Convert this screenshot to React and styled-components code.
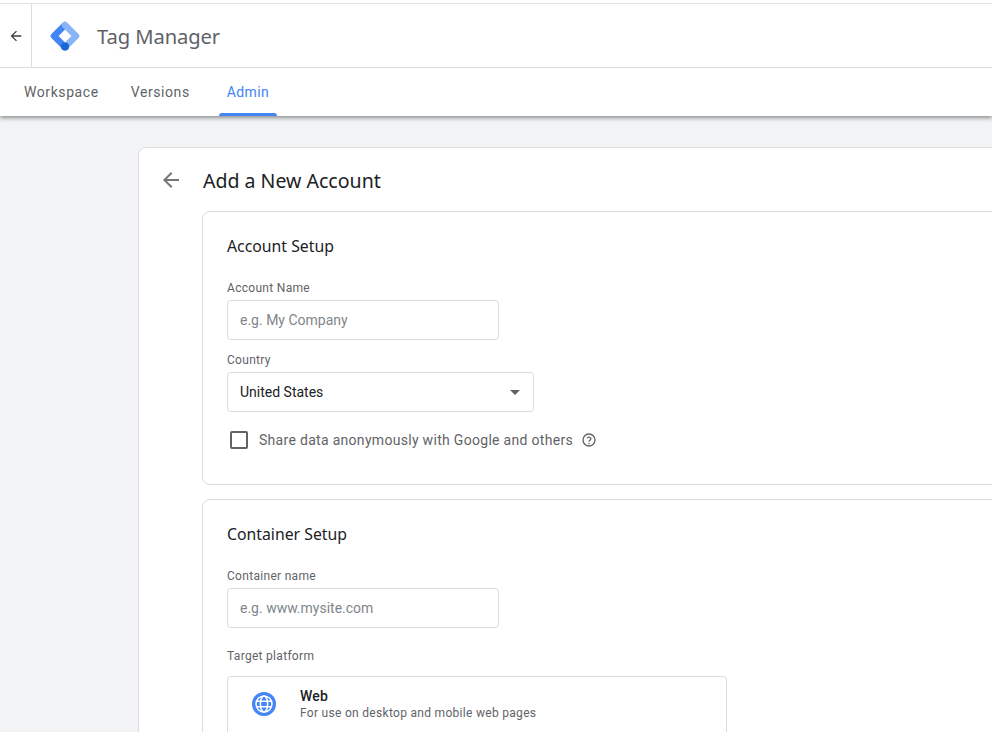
import React from 'react';
import styled, { createGlobalStyle } from 'styled-components';

const GlobalStyle = createGlobalStyle`
  html, body {
    margin: 0;
    padding: 0;
    height: 100%;
    overflow: hidden;
    background: #f1f3f4;
    font-family: Roboto, "Liberation Sans", sans-serif;
  }
  * { box-sizing: border-box; }
`;

const Page = styled.div`
  width: 992px;
  height: 732px;
  overflow: hidden;
  background: #f1f3f4;
`;

const TopBar = styled.header`
  position: relative;
  z-index: 1;
  background: #fff;
  padding-top: 3px;
  box-shadow: 0 2px 4px rgba(60, 64, 67, 0.55);
`;

const Brand = styled.div`
  display: flex;
  align-items: center;
  height: 65px;
  border-top: 1px solid #e0e0e0;
  border-bottom: 1px solid #dadce0;
`;

const BackCell = styled.div`
  width: 32px;
  height: 100%;
  display: flex;
  align-items: center;
  justify-content: center;
  padding-left: 1px;
  border-right: 1px solid #dadce0;
`;

const Arrow = styled.svg`
  display: block;
  width: ${p => p.$size}px;
  height: ${p => p.$size}px;
  fill: ${p => p.$color};
`;

const Logo = styled.svg`
  width: 32px;
  height: 32px;
  margin-left: 17px;
`;

const ProductName = styled.div`
  margin-left: 16px;
  font-family: "Noto Sans", Roboto, sans-serif;
  font-size: 20.2px;
  color: #5f6368;
  letter-spacing: -0.1px;
`;

const Tabs = styled.nav`
  display: flex;
  height: 48px;
  padding-left: 8px;
`;

const Tab = styled.div`
  position: relative;
  display: flex;
  align-items: center;
  padding: 0 16px 1px;
  margin-right: ${p => p.$gap || 0}px;
  font-size: 14px;
  font-weight: 400;
  letter-spacing: ${p => (p.$active ? '0.4px' : '0.58px')};
  color: ${p => (p.$active ? '#4285f4' : '#5f6368')};

  ${p => p.$active && `
    &::after {
      content: '';
      position: absolute;
      left: 8px;
      right: 8px;
      bottom: 0;
      height: 3px;
      background: #4285f4;
      border-radius: 3px 3px 0 0;
    }
  `}
`;

const Main = styled.main`
  padding: 31px 0 0 138px;
`;

const OuterCard = styled.section`
  width: 900px;
  background: #fff;
  border: 1px solid #dadce0;
  border-radius: 8px;
  padding: 0 0 0 63px;
`;

const TitleRow = styled.div`
  position: relative;
  display: flex;
  align-items: center;
  height: 63px;
  padding-top: 2px;
`;

const TitleBack = styled.div`
  position: absolute;
  left: -43px;
  top: 20px;
`;

const Title = styled.h1`
  margin: 0 0 0 1px;
  font-family: "Noto Sans", Roboto, sans-serif;
  font-size: 19.55px;
  font-weight: 400;
  color: #202124;
`;

const SetupCard = styled.div`
  border: 1px solid #dadce0;
  border-radius: 8px;
  padding: 24px;
  height: ${p => p.$height}px;
  margin-bottom: 14px;
`;

const SetupTitle = styled.h2`
  margin: -1px 0 23px;
  height: 22px;
  line-height: 22px;
  font-family: "Noto Sans", Roboto, sans-serif;
  font-size: 15.8px;
  font-weight: 400;
  color: #202124;
`;

const Label = styled.div`
  font-size: 12px;
  line-height: 16px;
  letter-spacing: 0.3px;
  color: #5f6368;
  margin-bottom: 4px;
`;

const PlatformLabel = styled(Label)`
  margin-top: 20px;
  margin-bottom: 12px;
`;

const Field = styled.div`
  display: flex;
  align-items: center;
  justify-content: space-between;
  width: ${p => p.$width}px;
  height: 40px;
  padding: 0 13px 0 12px;
  margin-bottom: 12px;
  border: 1px solid #dadce0;
  border-radius: 4px;
  background: #fff;
  font-size: 14px;
  color: ${p => (p.$value ? '#202124' : '#80868b')};
`;

const Caret = styled.span`
  width: 0;
  height: 0;
  border-left: 5px solid transparent;
  border-right: 5px solid transparent;
  border-top: 5px solid #5f6368;
`;

const CheckRow = styled.div`
  display: flex;
  align-items: center;
  height: 24px;
  margin-top: 16px;
  padding-left: 3px;
  font-size: 14px;
  letter-spacing: 0.3px;
  color: #5f6368;
`;

const CheckBox = styled.span`
  width: 18px;
  height: 18px;
  margin-right: 11px;
  border: 2px solid #5f6368;
  border-radius: 2px;
`;

const HelpIcon = styled.svg`
  width: 16px;
  height: 16px;
  margin-left: 8px;
`;

const PlatformCard = styled.div`
  display: flex;
  align-items: center;
  width: 500px;
  height: 80px;
  padding: 0 0 24px 24px;
  border: 1px solid #dadce0;
  border-radius: 4px;
`;

const PlatformIcon = styled.svg`
  width: 24px;
  height: 24px;
  margin-right: 24px;
  flex-shrink: 0;
`;

const PlatformName = styled.div`
  font-size: 14px;
  line-height: 18px;
  font-weight: 500;
  letter-spacing: 0.2px;
  color: #202124;
`;

const PlatformText = styled.div`
  font-size: 12px;
  line-height: 16px;
  letter-spacing: 0.3px;
  color: #5f6368;
`;

const BackArrow = ({ size, color }) => (
  <Arrow viewBox="0 0 24 24" $size={size} $color={color}>
    <path d="M20 11H7.83l5.59-5.59L12 4l-8 8 8 8 1.41-1.41L7.83 13H20v-2z" />
  </Arrow>
);

const TagManagerLogo = () => (
  <Logo viewBox="0 0 32 32">
    <g fill="none" strokeWidth="6.6" strokeLinecap="round" strokeLinejoin="round">
      <path d="M16 27 L5 16 L15 6" stroke="#4285f4" />
      <path d="M16 5 L27 16 L17 26" stroke="#8ab4f8" />
    </g>
    <circle cx="16" cy="26.6" r="4" fill="#1a66d2" />
  </Logo>
);

const GlobeIcon = () => (
  <PlatformIcon viewBox="0 0 24 24">
    <circle cx="12" cy="12" r="12" fill="#4285f4" />
    <g fill="none" stroke="#fff" strokeWidth="1.5">
      <circle cx="12" cy="12" r="8" />
      <ellipse cx="12" cy="12" rx="3.6" ry="8" />
      <path d="M4.5 9.3h15M4.5 14.7h15" />
    </g>
  </PlatformIcon>
);

export default function App() {
  return (
    <Page>
      <GlobalStyle />
      <TopBar>
        <Brand>
          <BackCell>
            <BackArrow size={16} color="#3c4043" />
          </BackCell>
          <TagManagerLogo />
          <ProductName>Tag Manager</ProductName>
        </Brand>
        <Tabs>
          <Tab>Workspace</Tab>
          <Tab $gap={5}>Versions</Tab>
          <Tab $active>Admin</Tab>
        </Tabs>
      </TopBar>
      <Main>
        <OuterCard>
          <TitleRow>
            <TitleBack>
              <BackArrow size={24} color="#757575" />
            </TitleBack>
            <Title>Add a New Account</Title>
          </TitleRow>
          <SetupCard $height={274}>
            <SetupTitle>Account Setup</SetupTitle>
            <Label>Account Name</Label>
            <Field $width={272}>e.g. My Company</Field>
            <Label>Country</Label>
            <Field $width={307} $value>
              United States
              <Caret />
            </Field>
            <CheckRow>
              <CheckBox />
              Share data anonymously with Google and others
              <HelpIcon viewBox="0 0 24 24" fill="none" stroke="#5f6368" strokeWidth="2">
                <circle cx="12" cy="12" r="9" />
                <path d="M9.2 9.5a2.9 2.9 0 0 1 5.6 .8c0 1.9-2.8 2.3-2.8 4.2" />
                <path d="M12 16.6v1.6" />
              </HelpIcon>
            </CheckRow>
          </SetupCard>
          <SetupCard $height={400}>
            <SetupTitle>Container Setup</SetupTitle>
            <Label>Container name</Label>
            <Field $width={272}>e.g. www.mysite.com</Field>
            <PlatformLabel>Target platform</PlatformLabel>
            <PlatformCard>
              <GlobeIcon />
              <div>
                <PlatformName>Web</PlatformName>
                <PlatformText>For use on desktop and mobile web pages</PlatformText>
              </div>
            </PlatformCard>
          </SetupCard>
        </OuterCard>
      </Main>
    </Page>
  );
}
